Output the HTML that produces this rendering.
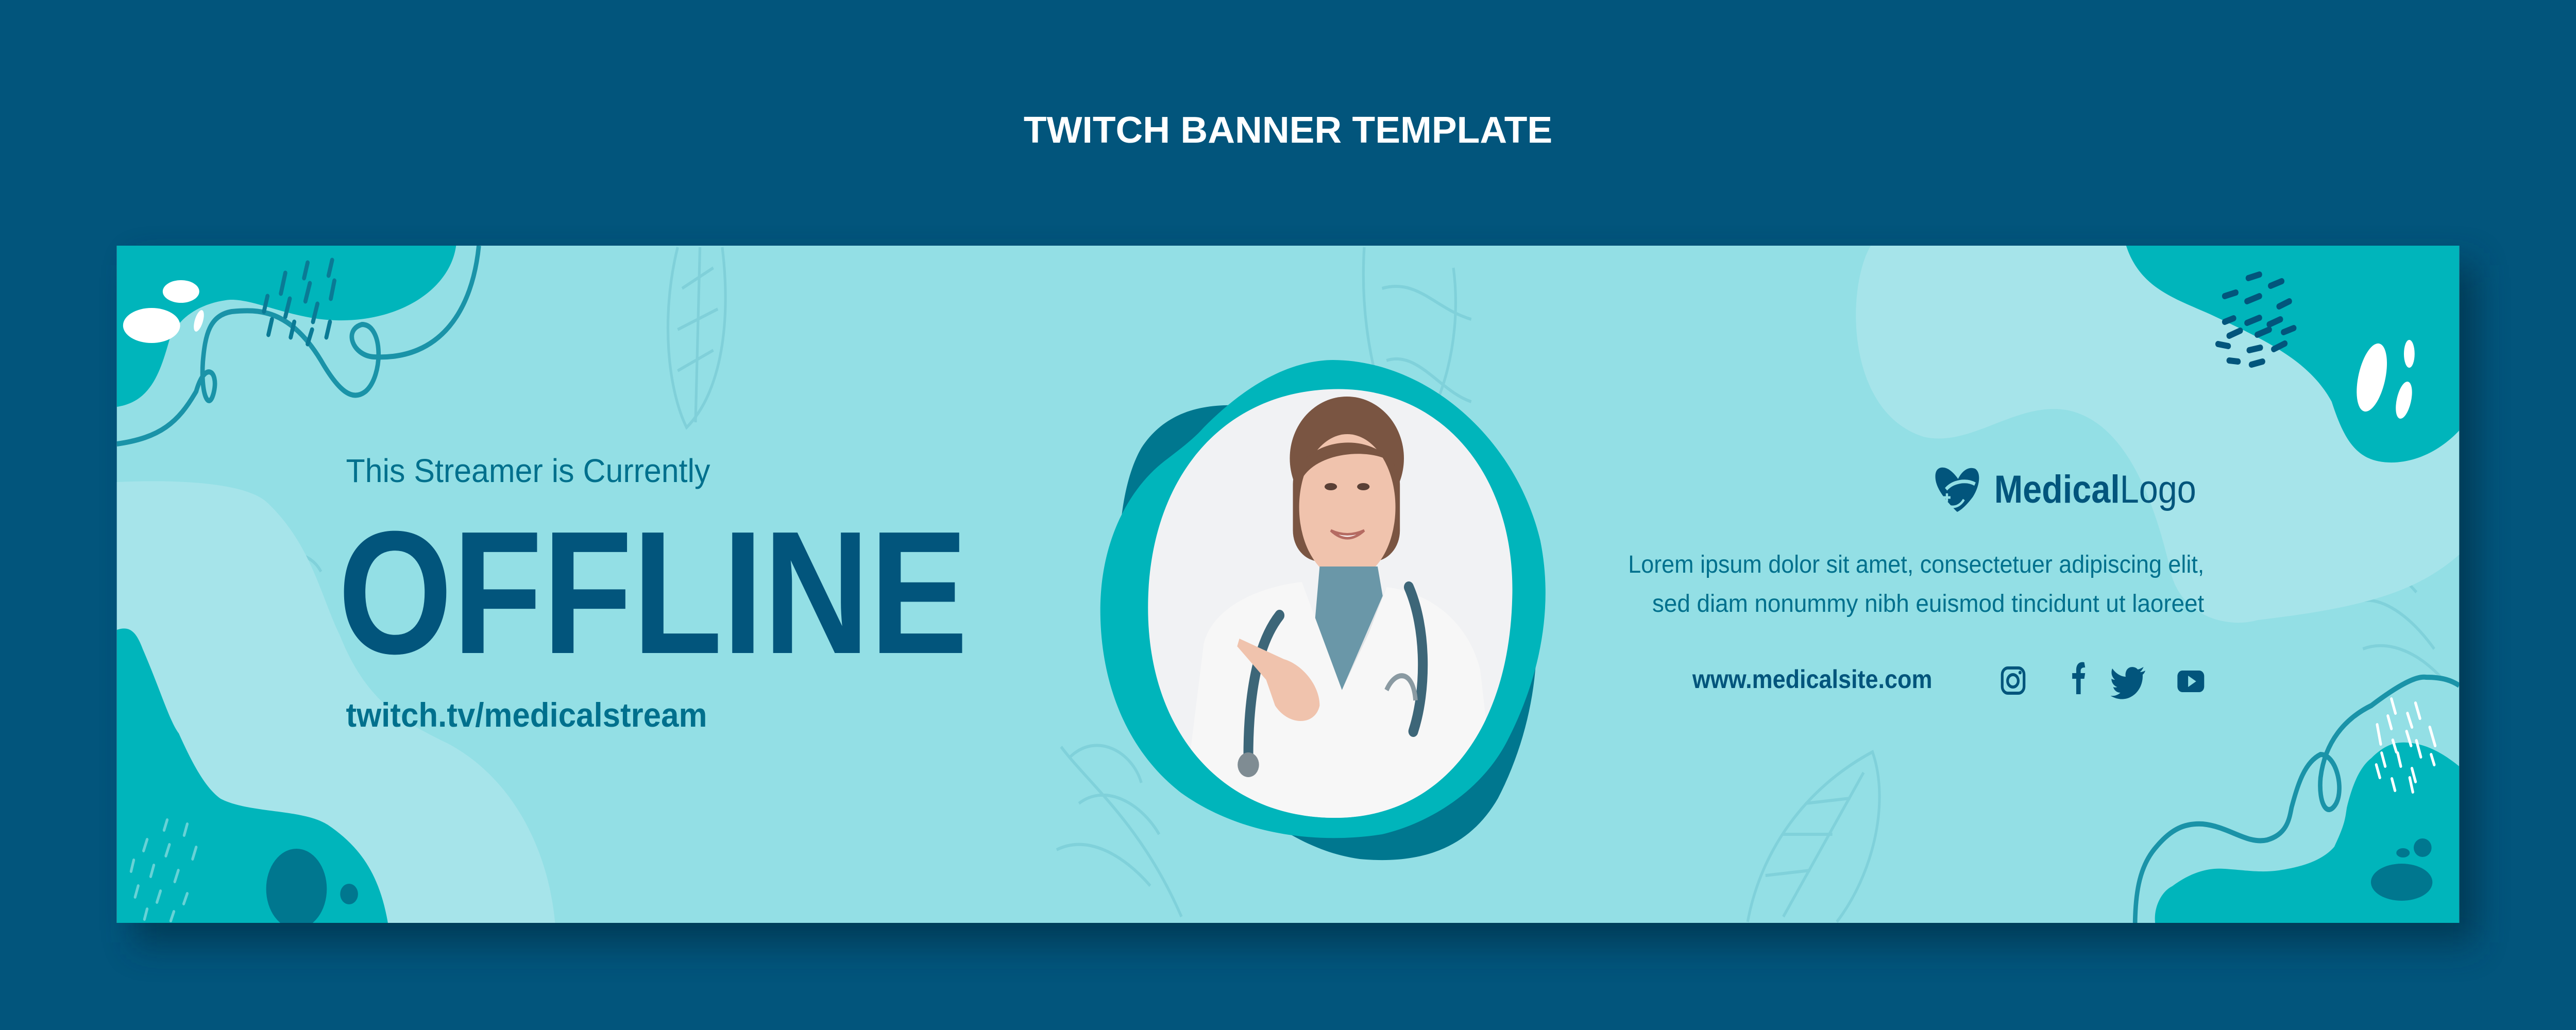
<!DOCTYPE html>
<html><head><meta charset="utf-8"><style>
html,body{margin:0;padding:0;background:#02557c;width:100%;height:100%;overflow:hidden;}
svg{display:block;width:100vw;height:100vh}
</style></head><body>
<svg viewBox="0 0 5778 2000" preserveAspectRatio="none" xmlns="http://www.w3.org/2000/svg">
<defs>
<filter id="sh" x="-10%" y="-10%" width="120%" height="130%"><feGaussianBlur stdDeviation="35"/></filter>
<clipPath id="ban"><rect x="262" y="477" width="5254" height="1315"/></clipPath>
<clipPath id="ph"><path d="M2980,756 C3230,745 3400,920 3392,1160 C3385,1420 3230,1590 2990,1588 C2740,1586 2575,1420 2575,1180 C2575,930 2740,765 2980,756 Z"/></clipPath>
</defs>
<rect width="5778" height="2000" fill="#02557c"/>
<text x="2889" y="277" text-anchor="middle" font-family="Liberation Sans, sans-serif" font-weight="bold" font-size="72" fill="#ffffff" textLength="1186" lengthAdjust="spacingAndGlyphs">TWITCH BANNER TEMPLATE</text>
<rect x="300" y="515" width="5254" height="1315" fill="#00304a" opacity="0.75" filter="url(#sh)"/>
<rect x="262" y="477" width="5254" height="1315" fill="#93dfe5"/>
<g clip-path="url(#ban)">
<g fill="none" stroke="#7ccdd7" stroke-width="6" opacity="0.8">
<path d="M1520,480 C1480,620 1500,760 1540,830 C1620,760 1640,620 1620,480"/>
<path d="M1570,480 L1560,820 M1530,560 L1600,520 M1520,640 L1610,600 M1520,720 L1600,680"/>
<path d="M3060,480 C3050,620 3080,760 3150,880 M3150,880 C3240,800 3280,650 3260,520 M3100,560 C3180,540 3220,600 3300,620 M3110,700 C3180,680 3230,760 3300,780"/>
<path d="M420,1010 C520,980 640,1060 700,1160 M480,1060 C520,1000 600,990 640,1040 M560,1120 C600,1060 690,1060 720,1110 M420,1080 C440,1180 460,1260 520,1320 M560,1160 C560,1240 580,1300 600,1350"/>
<path d="M2380,1450 C2440,1520 2560,1600 2650,1780 M2400,1470 C2460,1420 2540,1460 2560,1520 M2420,1560 C2480,1520 2560,1560 2600,1620 M2370,1650 C2440,1620 2520,1660 2580,1720"/>
<path d="M3920,1790 C3950,1650 4050,1530 4200,1460 C4240,1560 4200,1700 4120,1790 M4000,1780 L4180,1500 M3960,1700 L4060,1690 M4000,1620 L4110,1620 M4050,1560 L4150,1550"/>
<path d="M5200,990 C5300,980 5380,1040 5440,1120 M5240,1080 C5300,1060 5370,1100 5420,1150 M5280,1170 C5340,1150 5410,1200 5460,1260 M5300,1260 C5360,1240 5430,1270 5480,1320"/>
</g>
<path d="M262,477 L1023,477 C1010,560 900,625 755,622 C650,620 560,575 506,583 C450,590 400,615 380,660 C360,720 340,780 262,790 Z" fill="#00b5bb"/>
<path d="M1074,477 C1060,600 990,700 838,693 C790,690 770,640 812,630 C860,630 860,730 820,760 C790,780 760,760 720,700 C650,600 580,600 520,605 C470,612 460,650 455,703 C450,770 470,800 480,760 C490,720 460,700 440,760 C400,820 360,850 262,862" fill="none" stroke="#1a93a8" stroke-width="10"/>
<ellipse cx="406" cy="566" rx="41" ry="22" fill="#fff"/>
<ellipse cx="340" cy="632" rx="64" ry="34" fill="#fff"/>
<ellipse cx="446" cy="623" rx="9" ry="22" transform="rotate(20 446 623)" fill="#fff"/>
<g stroke="#0a7a95" stroke-width="9" stroke-linecap="round">
<path d="M690,510 L682,540 M745,505 L737,535 M640,530 L630,570 M695,550 L685,585 M750,545 L742,580 M600,575 L592,605 M650,580 L640,615 M712,590 L702,625 M610,620 L602,650 M660,625 L652,655 M700,640 L690,668 M740,625 L732,655"/>
</g>
<path d="M262,936 C420,930 560,940 602,978 C700,1060 720,1160 762,1233 C820,1360 900,1400 1003,1443 C1150,1510 1230,1650 1245,1792 L262,1792 Z" fill="#a6e4ea"/>
<path d="M262,1223 C290,1215 305,1225 320,1260 C360,1340 380,1400 401,1424 C430,1480 460,1530 495,1551 C560,1580 680,1570 736,1602 C800,1640 850,1690 870,1792 L262,1792 Z" fill="#00b5bb"/>
<ellipse cx="665" cy="1726" rx="68" ry="78" fill="#00778f"/>
<circle cx="783" cy="1736" r="20" fill="#00778f"/>
<g stroke="#67d2d6" stroke-width="6" stroke-linecap="round">
<path d="M375,1592 L368,1612 M420,1600 L413,1622 M330,1630 L322,1652 M380,1640 L372,1662 M440,1645 L432,1668 M300,1670 L294,1692 M345,1680 L338,1702 M400,1690 L392,1712 M310,1720 L303,1742 M360,1730 L352,1752 M420,1735 L412,1755 M330,1765 L324,1785 M390,1770 L383,1788"/>
</g>
<path d="M4196,477 C4140,560 4140,800 4314,848 C4420,870 4520,780 4635,796 C4780,820 4840,1000 4871,1118 C4900,1200 5000,1220 5064,1204 C5300,1180 5420,1150 5516,1077 L5516,477 Z" fill="#a6e4ea"/>
<path d="M4769,477 C4800,560 4880,580 4957,610 C5080,660 5180,700 5230,780 C5260,860 5290,900 5370,898 C5440,895 5490,860 5516,836 L5516,477 Z" fill="#00b5bb"/>
<g stroke="#02557c" stroke-width="12" stroke-linecap="round">
<path d="M5043,540 L5068,533 M5093,555 L5118,546 M4990,575 L5015,568 M5040,585 L5068,575 M5112,595 L5135,585 M4990,625 L5010,618 M5040,627 L5068,617 M5090,630 L5115,620 M5000,652 L5025,642 M5063,650 L5090,640 M5122,645 L5145,637 M4975,668 L4998,672 M5045,680 L5070,675 M5100,678 L5125,667 M5000,700 L5020,702 M5050,708 L5075,702"/>
</g>
<ellipse cx="5320" cy="733" rx="30" ry="68" transform="rotate(15 5320 733)" fill="#fff"/>
<ellipse cx="5404" cy="687" rx="12" ry="27" fill="#fff"/>
<ellipse cx="5392" cy="777" rx="16" ry="37" transform="rotate(15 5392 777)" fill="#fff"/>
<path d="M4834,1792 C4830,1760 4850,1730 4872,1721 C4920,1690 4960,1685 4989,1687 C5040,1690 5070,1695 5112,1690 C5190,1680 5220,1660 5236,1644 C5260,1600 5260,1590 5264,1568 C5280,1510 5300,1485 5319,1472 C5350,1445 5375,1440 5401,1442 C5450,1445 5490,1470 5516,1488 L5516,1792 Z" fill="#00b5bb"/>
<ellipse cx="5387" cy="1713" rx="69" ry="36" fill="#00778f"/>
<ellipse cx="5434" cy="1646" rx="20" ry="18" fill="#00778f"/>
<ellipse cx="5390" cy="1656" rx="15" ry="9" fill="#00778f"/>
<path d="M4789,1792 C4790,1730 4800,1680 4837,1644 C4870,1610 4900,1598 4941,1600 C5000,1605 5040,1640 5085,1631 C5130,1620 5135,1590 5140,1568 C5155,1520 5170,1480 5205,1465 C5240,1465 5258,1530 5240,1560 C5220,1590 5200,1560 5205,1510 C5215,1440 5260,1395 5319,1370 C5380,1330 5420,1312 5442,1315 C5480,1315 5500,1322 5516,1331" fill="none" stroke="#1a93a8" stroke-width="10"/>
<g stroke="#ffffff" stroke-width="6" stroke-linecap="round">
<path d="M5364,1357 L5373,1385 M5418,1365 L5428,1395 M5356,1390 L5364,1415 M5400,1385 L5410,1412 M5450,1412 L5462,1448 M5332,1407 L5340,1445 M5367,1437 L5375,1460 M5398,1420 L5408,1448 M5420,1438 L5430,1470 M5453,1465 L5460,1485 M5342,1462 L5350,1488 M5378,1462 L5385,1488 M5410,1492 L5418,1518 M5330,1485 L5338,1510 M5365,1512 L5372,1535 M5405,1510 L5412,1538"/>
</g>
</g>
<path d="M2560,870 C2620,790 2720,780 2820,790 C3050,800 3300,900 3400,1050 C3480,1200 3450,1400 3360,1550 C3300,1640 3200,1680 3050,1668 C2900,1650 2800,1560 2700,1500 C2580,1420 2520,1300 2510,1150 C2505,1030 2520,930 2560,870 Z" fill="#00778f"/>
<path d="M2700,830 C2780,760 2880,700 2990,699 C3200,700 3400,850 3455,1050 C3490,1200 3440,1340 3380,1440 C3320,1540 3200,1600 3100,1620 C2950,1640 2780,1620 2650,1540 C2530,1460 2467,1330 2468,1180 C2470,1040 2540,940 2620,890 C2650,870 2680,850 2700,830 Z" fill="#00b5bb"/>
<path d="M2980,756 C3230,745 3400,920 3392,1160 C3385,1420 3230,1590 2990,1588 C2740,1586 2575,1420 2575,1180 C2575,930 2740,765 2980,756 Z" fill="#f1f2f4"/>
<g clip-path="url(#ph)">
<ellipse cx="3021" cy="890" rx="128" ry="120" fill="#7a5542"/>
<rect x="2900" y="880" width="240" height="210" rx="60" fill="#7a5542"/>
<ellipse cx="3022" cy="985" rx="108" ry="142" fill="#f0c3ad"/>
<path d="M2920,900 C2960,850 3080,840 3130,905 C3100,870 2960,870 2920,930 Z" fill="#7a5542"/>
<ellipse cx="2985" cy="945" rx="14" ry="7" fill="#5a4036"/><ellipse cx="3058" cy="945" rx="14" ry="7" fill="#5a4036"/>
<path d="M2985,1030 Q3022,1060 3060,1030 Q3022,1045 2985,1030 Z" fill="#ffffff" stroke="#b56b62" stroke-width="5"/>
<path d="M2960,1100 L3090,1100 L3110,1200 L3010,1340 L2950,1200 Z" fill="#6a97a8"/>
<path d="M2700,1250 C2720,1180 2820,1140 2920,1130 L3010,1340 L3110,1140 C3200,1150 3290,1200 3320,1300 L3360,1600 L2650,1600 Z" fill="#f7f7f7"/>
<path d="M2920,1130 L3010,1340 L2950,1200 Z M3110,1140 L3010,1340 L3070,1230 Z" fill="#e2e4e6"/>
<path d="M2870,1195 C2820,1250 2800,1350 2800,1470" fill="none" stroke="#3d6678" stroke-width="22" stroke-linecap="round"/>
<path d="M3160,1140 C3200,1220 3200,1340 3170,1420" fill="none" stroke="#3d6678" stroke-width="22" stroke-linecap="round"/>
<path d="M3110,1340 C3130,1300 3170,1300 3175,1360" fill="none" stroke="#8a9aa2" stroke-width="10"/>
<circle cx="2800" cy="1485" r="24" fill="#7f8c93"/>
<path d="M2780,1240 L2880,1280 C2920,1290 2960,1330 2960,1370 C2950,1410 2890,1410 2860,1370 L2840,1320 L2775,1255 Z" fill="#f0c3ad"/>
</g>
<g font-family="Liberation Sans, sans-serif">
<text x="776" y="936" font-size="64" fill="#00708d" textLength="817" lengthAdjust="spacingAndGlyphs">This Streamer is Currently</text>
<text x="758" y="1268" font-size="340" font-weight="bold" fill="#02557c" textLength="1413" lengthAdjust="spacingAndGlyphs">OFFLINE</text>
<text x="776" y="1411" font-size="66" font-weight="bold" fill="#00708d" textLength="810" lengthAdjust="spacingAndGlyphs">twitch.tv/medicalstream</text>
<text x="4473" y="976" font-size="76" fill="#02557c" textLength="453" lengthAdjust="spacingAndGlyphs"><tspan font-weight="bold">Medical</tspan>Logo</text>
<text x="3652" y="1112" font-size="48" fill="#00708d" textLength="1292" lengthAdjust="spacingAndGlyphs">Lorem ipsum dolor sit amet, consectetuer adipiscing elit,</text>
<text x="3706" y="1188" font-size="48" fill="#00708d" textLength="1238" lengthAdjust="spacingAndGlyphs">sed diam nonummy nibh euismod tincidunt ut laoreet</text>
<text x="3796" y="1336" font-size="50" font-weight="bold" fill="#02557c" textLength="538" lengthAdjust="spacingAndGlyphs">www.medicalsite.com</text>
</g>
<path d="M4390,994 C4350,960 4341,940 4341,925 C4341,905 4360,905 4372,912 C4382,918 4388,925 4392,930 C4400,915 4415,905 4430,910 C4445,918 4440,945 4425,965 C4412,980 4400,990 4390,994 Z" fill="#02557c"/>
<path d="M4365,950 C4380,935 4410,930 4430,940" fill="none" stroke="#93dfe5" stroke-width="7"/>
<path d="M4367,958 L4367,974 M4359,966 L4375,966" stroke="#93dfe5" stroke-width="5"/>
<path d="M4360,975 C4375,990 4395,985 4405,970" fill="none" stroke="#93dfe5" stroke-width="5"/>
<rect x="4491" y="1297" width="49" height="49" rx="13" fill="none" stroke="#02557c" stroke-width="6"/>
<circle cx="4515" cy="1322" r="12" fill="none" stroke="#02557c" stroke-width="6"/>
<circle cx="4531" cy="1306" r="3.5" fill="#02557c"/>
<path d="M4657,1348 L4657,1318 L4648,1318 L4648,1307 L4657,1307 L4657,1301 C4657,1290 4664,1284 4675,1286 L4677,1296 C4670,1296 4667,1298 4667,1303 L4667,1307 L4677,1307 L4675,1318 L4667,1318 L4667,1348 Z" fill="#02557c"/>
<path d="M4812,1302 C4808,1304 4803,1305 4800,1305 C4804,1302 4806,1299 4808,1295 C4804,1297 4800,1299 4795,1300 C4790,1294 4777,1293 4771,1300 C4767,1305 4767,1311 4768,1314 C4757,1314 4745,1307 4738,1298 C4734,1306 4737,1315 4744,1320 C4741,1320 4738,1319 4736,1318 C4736,1326 4742,1332 4749,1334 C4746,1335 4743,1335 4740,1334 C4742,1340 4748,1345 4756,1345 C4750,1350 4742,1352 4734,1351 C4770,1370 4808,1345 4806,1310 C4809,1308 4811,1305 4812,1302 Z" fill="#02557c"/>
<rect x="4884" y="1302" width="60" height="42" rx="11" fill="#02557c"/>
<path d="M4908,1312 L4926,1323 L4908,1334 Z" fill="#93dfe5"/>
</svg>
</body></html>
